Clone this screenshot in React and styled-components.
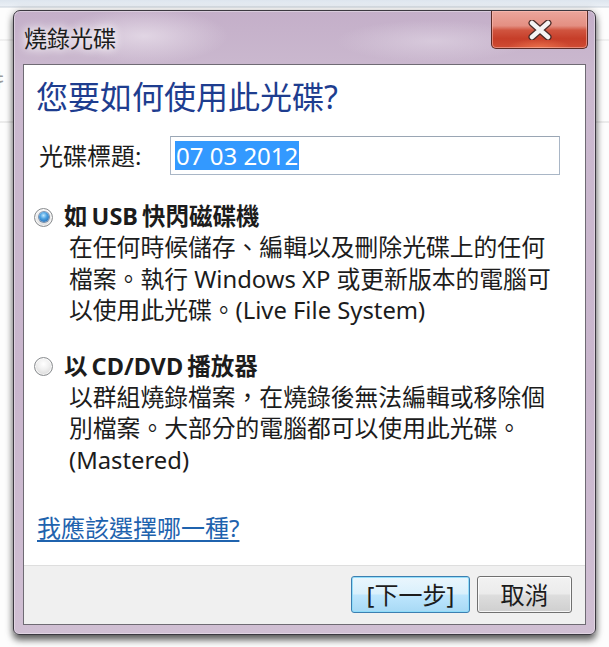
import React from "react";
import styled, { createGlobalStyle } from "styled-components";

const FONT = `"Noto Sans", "Noto Sans CJK TC", sans-serif`;

const Global = createGlobalStyle`
  html, body { margin: 0; padding: 0; }
  body {
    width: 609px;
    height: 647px;
    overflow: hidden;
    background: #fdfdfd;
    font-family: ${FONT};
  }
`;

const Desktop = styled.div`
  position: relative;
  width: 609px;
  height: 647px;
  box-sizing: border-box;
  padding: 10px 0 0 13px;
  overflow: hidden;
  background: linear-gradient(
    #dde5ee 0px,
    #eaeff5 6px,
    #c9d1da 7px,
    #fdfdfd 8px,
    #fdfdfd 39px,
    #e4e4e4 40px,
    #fdfdfd 41px,
    #fdfdfd 121px,
    #dadada 122px,
    #fdfdfd 123px
  );
`;

const BehindText = styled.span`
  position: absolute;
  left: 0;
  top: 70px;
  width: 13px;
  overflow: hidden;
  white-space: nowrap;
  font-size: 20px;
  line-height: 24px;
  color: #9a9a9a;
  font-family: ${FONT};
  direction: rtl;
`;

const Window = styled.div`
  position: relative;
  z-index: 1;
  width: 583px;
  height: 625px;
  box-sizing: border-box;
  border: 1px solid #3b3840;
  border-radius: 7px 7px 6px 6px;
  padding: 0 9px 9px;
  display: flex;
  flex-direction: column;
  background:
    radial-gradient(ellipse 120px 40px at 130px 25px, rgba(236, 228, 238, 0.7), rgba(236, 228, 238, 0) 70%),
    radial-gradient(ellipse 140px 30px at 420px 30px, rgba(226, 216, 230, 0.6), rgba(226, 216, 230, 0) 70%),
    linear-gradient(180deg, #c4afc9 0%, #cbb9cf 10%, #c9b6cd 60%, #d0bfd3 100%);
  box-shadow:
    inset 0 0 0 1px rgba(255, 255, 255, 0.35),
    0 5px 7px rgba(0, 0, 0, 0.6),
    0 0 8px rgba(0, 0, 0, 0.18);
`;

const TitleBar = styled.div`
  height: 53px;
  display: flex;
  justify-content: space-between;
  align-items: flex-start;
`;

const Title = styled.div`
  font-size: 23px;
  line-height: 54px;
  color: #1c1c1c;
  padding-left: 1px;
  text-shadow: 0 0 8px #ffffff, 0 0 12px #ffffff;
`;

const CloseButton = styled.div`
  width: 97px;
  height: 38px;
  margin-right: -2px;
  box-sizing: border-box;
  border: 1px solid #5a2b26;
  border-top: none;
  border-radius: 0 0 5px 5px;
  display: flex;
  align-items: center;
  justify-content: center;
  background:
    radial-gradient(ellipse 40px 12px at 50% 100%, rgba(240, 120, 80, 0.8), rgba(240, 120, 80, 0) 80%),
    linear-gradient(180deg, #eba69c 0%, #e48f82 40%, #d0543f 52%, #c63e29 75%, #cf4c33 100%);
  box-shadow: inset 0 0 0 1px rgba(255, 200, 190, 0.5);
`;

const Client = styled.div`
  flex: 1;
  display: flex;
  flex-direction: column;
  border: 1px solid #6f6b74;
  background: #ffffff;
  min-height: 0;
`;

const Content = styled.div`
  flex: 1;
  padding: 13px 0 0 12px;
  display: flex;
  flex-direction: column;
  align-items: flex-start;
`;

const Heading = styled.div`
  font-size: 32px;
  line-height: 38px;
  color: #1e3d8f;
`;

const FieldRow = styled.div`
  margin-top: 20px;
  margin-left: 3px;
  display: flex;
  align-items: center;
  height: 39px;
`;

const FieldLabel = styled.div`
  width: 131px;
  font-size: 24px;
  line-height: 30px;
  color: #1c1c1c;
`;

const TextBox = styled.div`
  width: 390px;
  height: 39px;
  box-sizing: border-box;
  border: 1px solid #a9b6c6;
  border-top-color: #9aa6b4;
  padding-left: 4px;
  display: flex;
  align-items: center;
  background: #fff;
`;

const Selected = styled.span`
  background: #3399ff;
  color: #ffffff;
  font-size: 24px;
  line-height: 29px;
  height: 29px;
  padding: 0 1px;
`;

const OptionHead = styled.div`
  margin-top: ${(p) => p.$mt}px;
  margin-left: -2px;
  height: 30px;
  display: flex;
  align-items: center;
  gap: 11px;
`;

const Radio = styled.span`
  width: 19px;
  height: 19px;
  box-sizing: border-box;
  border-radius: 50%;
  border: 1px solid #8a8d90;
  background: radial-gradient(circle at 50% 35%, #ffffff 0%, #f0f0f0 40%, #cfcfcf 100%);
  display: flex;
  align-items: center;
  justify-content: center;
  flex: none;
  box-shadow: inset 0 0 0 1px rgba(255, 255, 255, 0.7);
`;

const RadioDot = styled.span`
  width: 10px;
  height: 10px;
  border-radius: 50%;
  background: radial-gradient(circle at 45% 35%, #bfe8ff 0%, #4aa0e0 40%, #1a5aa3 100%);
  box-shadow: 0 0 0 1px rgba(30, 70, 120, 0.55);
`;

const OptionTitle = styled.div`
  font-size: 23.5px;
  line-height: 30px;
  font-weight: 700;
  color: #1c1c1c;
  margin-top: -2px;
  word-spacing: -2px;
`;

const Description = styled.div`
  margin-left: 33px;
  font-size: 23.8px;
  line-height: 31.5px;
  color: #1c1c1c;
  white-space: nowrap;
`;

const HelpLink = styled.a`
  margin-top: 37px;
  margin-left: 1px;
  font-size: 24px;
  line-height: 30px;
  color: #1f63ae;
  text-decoration: underline;
  text-underline-offset: 3px;
  cursor: pointer;
`;

const Footer = styled.div`
  height: 57px;
  border-top: 1px solid #dedede;
  background: #f0f0f0;
  display: flex;
  align-items: center;
  justify-content: flex-end;
  gap: 7px;
  padding: 0 13px 1px 0;
`;

const Button = styled.div`
  width: ${(p) => p.$w}px;
  height: 37px;
  box-sizing: border-box;
  border-radius: 3px;
  display: flex;
  align-items: center;
  justify-content: center;
  font-size: 24px;
  line-height: 30px;
  color: #1c1c1c;
  border: 1px solid ${(p) => (p.$primary ? "#3c7fb1" : "#707070")};
  background: ${(p) =>
    p.$primary
      ? "linear-gradient(180deg, #eaf6fd 0%, #d9f0fc 48%, #bee6fd 52%, #a7d9f5 100%)"
      : "linear-gradient(180deg, #f2f2f2 0%, #ebebeb 48%, #dddddd 52%, #cfcfcf 100%)"};
  box-shadow: inset 0 0 0 1px
    ${(p) => (p.$primary ? "rgba(140, 220, 250, 0.9)" : "rgba(255, 255, 255, 0.8)")};
`;

function CloseGlyph() {
  return (
    <svg width="28" height="20" viewBox="0 0 28 20">
      <path
        d="M6 3 L22 17 M22 3 L6 17"
        stroke="#4a2a26"
        strokeWidth="7"
        strokeLinecap="round"
        fill="none"
      />
      <path
        d="M6 3 L22 17 M22 3 L6 17"
        stroke="#f4f4f4"
        strokeWidth="4.5"
        strokeLinecap="round"
        fill="none"
      />
    </svg>
  );
}

export default function App() {
  return (
    <>
      <Global />
      <Desktop>
        <BehindText>衣扌</BehindText>
        <Window>
          <TitleBar>
            <Title>燒錄光碟</Title>
            <CloseButton>
              <CloseGlyph />
            </CloseButton>
          </TitleBar>
          <Client>
            <Content>
              <Heading>您要如何使用此光碟?</Heading>
              <FieldRow>
                <FieldLabel>光碟標題:</FieldLabel>
                <TextBox>
                  <Selected>07 03 2012</Selected>
                </TextBox>
              </FieldRow>

              <OptionHead $mt={27}>
                <Radio>
                  <RadioDot />
                </Radio>
                <OptionTitle>如 USB 快閃磁碟機</OptionTitle>
              </OptionHead>
              <Description>
                在任何時候儲存、編輯以及刪除光碟上的任何
                <br />
                檔案。執行 Windows XP 或更新版本的電腦可
                <br />
                以使用此光碟。(Live File System)
              </Description>

              <OptionHead $mt={25}>
                <Radio />
                <OptionTitle>以 CD/DVD 播放器</OptionTitle>
              </OptionHead>
              <Description>
                以群組燒錄檔案，在燒錄後無法編輯或移除個
                <br />
                別檔案。大部分的電腦都可以使用此光碟。
                <br />
                (Mastered)
              </Description>

              <HelpLink>我應該選擇哪一種?</HelpLink>
            </Content>
            <Footer>
              <Button $primary $w={119}>[下一步]</Button>
              <Button $w={95}>取消</Button>
            </Footer>
          </Client>
        </Window>
      </Desktop>
    </>
  );
}
